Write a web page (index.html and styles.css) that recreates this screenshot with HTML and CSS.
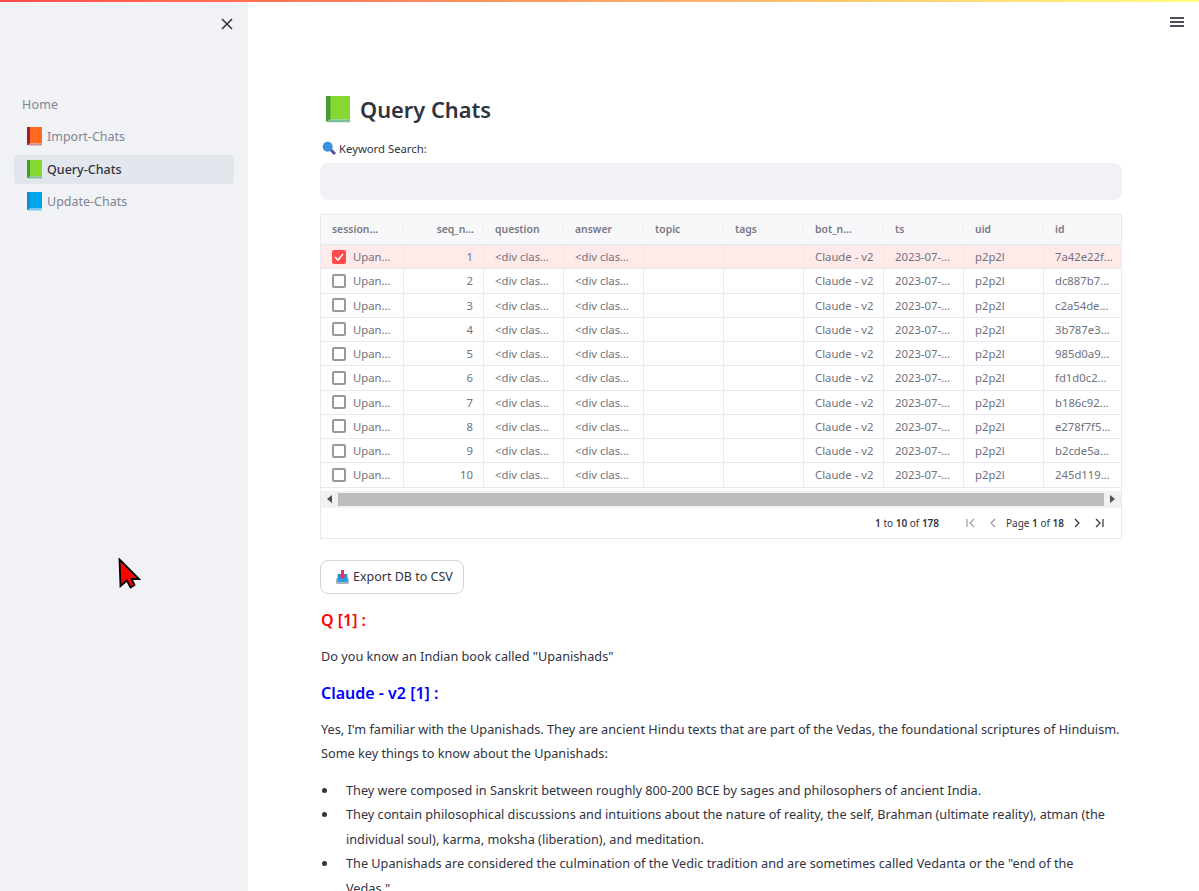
FILE: index.html
```html
<!DOCTYPE html>
<html lang="en">
<head>
    <meta charset="UTF-8">
    <meta name="viewport" content="width=device-width, initial-scale=1.0">
    <title>Query Chats</title>
    <link rel="stylesheet" href="styles.css">
</head>
<body>
    <div class="decoration"></div>
    <svg width="0" height="0" class="defs">
        <symbol id="book" viewBox="0 0 15 19">
            <rect class="book-spine" x="0" y="0" width="3" height="18"/>
            <rect class="book-cover" x="3" y="0" width="12" height="16.5"/>
            <rect class="book-pages" x="1.5" y="16.5" width="13.5" height="2"/>
        </symbol>
    </svg>
    <div class="app">
        <aside class="sidebar">
            <div class="sidebar-top">
                <svg class="close-icon" width="12" height="12" viewBox="0 0 12 12"><path d="M1 1l10 10M11 1L1 11"/></svg>
            </div>
            <nav class="nav">
                <a class="nav-home">Home</a>
                <a class="nav-item nav-orange"><svg class="book" width="15" height="19"><use href="#book"/></svg>Import-Chats</a>
                <a class="nav-item nav-green active"><svg class="book" width="15" height="19"><use href="#book"/></svg>Query-Chats</a>
                <a class="nav-item nav-blue"><svg class="book" width="15" height="19"><use href="#book"/></svg>Update-Chats</a>
            </nav>
        </aside>
        <main class="main">
            <div class="menu-row">
                <svg class="menu-icon" width="14" height="10" viewBox="0 0 14 10"><path d="M0 1h14M0 5h14M0 9h14"/></svg>
            </div>
            <div class="content">
                <h1 class="page-title"><svg class="title-book nav-green" width="24" height="27" viewBox="0 0 15 19" preserveAspectRatio="none"><use href="#book"/></svg>Query Chats</h1>

                <label class="search-label">
                    <svg width="14" height="14" viewBox="0 0 14 14"><path class="glass-handle" d="M8.5 8.5l4.5 4.5"/><circle class="glass-lens" cx="5.7" cy="5.7" r="5"/></svg>
                    Keyword Search:
                </label>
                <div class="search-input"></div>

                <div class="grid">
                    <div class="row row-head">
                        <div class="cell first">session…</div><div class="cell num">seq_n…</div><div class="cell">question</div><div class="cell">answer</div><div class="cell">topic</div><div class="cell">tags</div><div class="cell">bot_n…</div><div class="cell">ts</div><div class="cell">uid</div><div class="cell">id</div>
                    </div>
                    <div class="row selected">
                        <div class="cell first"><span class="check checked"><svg width="10" height="8" viewBox="0 0 10 8"><path d="M1 4l3 3 5-6"/></svg></span>Upan…</div><div class="cell num">1</div><div class="cell">&lt;div clas…</div><div class="cell">&lt;div clas…</div><div class="cell"></div><div class="cell"></div><div class="cell">Claude - v2</div><div class="cell">2023-07-…</div><div class="cell">p2p2l</div><div class="cell">7a42e22f…</div>
                    </div>
                    <div class="row">
                        <div class="cell first"><span class="check"></span>Upan…</div><div class="cell num">2</div><div class="cell">&lt;div clas…</div><div class="cell">&lt;div clas…</div><div class="cell"></div><div class="cell"></div><div class="cell">Claude - v2</div><div class="cell">2023-07-…</div><div class="cell">p2p2l</div><div class="cell">dc887b7…</div>
                    </div>
                    <div class="row">
                        <div class="cell first"><span class="check"></span>Upan…</div><div class="cell num">3</div><div class="cell">&lt;div clas…</div><div class="cell">&lt;div clas…</div><div class="cell"></div><div class="cell"></div><div class="cell">Claude - v2</div><div class="cell">2023-07-…</div><div class="cell">p2p2l</div><div class="cell">c2a54de…</div>
                    </div>
                    <div class="row">
                        <div class="cell first"><span class="check"></span>Upan…</div><div class="cell num">4</div><div class="cell">&lt;div clas…</div><div class="cell">&lt;div clas…</div><div class="cell"></div><div class="cell"></div><div class="cell">Claude - v2</div><div class="cell">2023-07-…</div><div class="cell">p2p2l</div><div class="cell">3b787e3…</div>
                    </div>
                    <div class="row">
                        <div class="cell first"><span class="check"></span>Upan…</div><div class="cell num">5</div><div class="cell">&lt;div clas…</div><div class="cell">&lt;div clas…</div><div class="cell"></div><div class="cell"></div><div class="cell">Claude - v2</div><div class="cell">2023-07-…</div><div class="cell">p2p2l</div><div class="cell">985d0a9…</div>
                    </div>
                    <div class="row">
                        <div class="cell first"><span class="check"></span>Upan…</div><div class="cell num">6</div><div class="cell">&lt;div clas…</div><div class="cell">&lt;div clas…</div><div class="cell"></div><div class="cell"></div><div class="cell">Claude - v2</div><div class="cell">2023-07-…</div><div class="cell">p2p2l</div><div class="cell">fd1d0c2…</div>
                    </div>
                    <div class="row">
                        <div class="cell first"><span class="check"></span>Upan…</div><div class="cell num">7</div><div class="cell">&lt;div clas…</div><div class="cell">&lt;div clas…</div><div class="cell"></div><div class="cell"></div><div class="cell">Claude - v2</div><div class="cell">2023-07-…</div><div class="cell">p2p2l</div><div class="cell">b186c92…</div>
                    </div>
                    <div class="row">
                        <div class="cell first"><span class="check"></span>Upan…</div><div class="cell num">8</div><div class="cell">&lt;div clas…</div><div class="cell">&lt;div clas…</div><div class="cell"></div><div class="cell"></div><div class="cell">Claude - v2</div><div class="cell">2023-07-…</div><div class="cell">p2p2l</div><div class="cell">e278f7f5…</div>
                    </div>
                    <div class="row">
                        <div class="cell first"><span class="check"></span>Upan…</div><div class="cell num">9</div><div class="cell">&lt;div clas…</div><div class="cell">&lt;div clas…</div><div class="cell"></div><div class="cell"></div><div class="cell">Claude - v2</div><div class="cell">2023-07-…</div><div class="cell">p2p2l</div><div class="cell">b2cde5a…</div>
                    </div>
                    <div class="row">
                        <div class="cell first"><span class="check"></span>Upan…</div><div class="cell num">10</div><div class="cell">&lt;div clas…</div><div class="cell">&lt;div clas…</div><div class="cell"></div><div class="cell"></div><div class="cell">Claude - v2</div><div class="cell">2023-07-…</div><div class="cell">p2p2l</div><div class="cell">245d119…</div>
                    </div>
                    <div class="scrollbar">
                        <span class="arrow arrow-left"></span>
                        <div class="scroll-track"><div class="scroll-thumb"></div></div>
                        <span class="arrow arrow-right"></span>
                    </div>
                    <div class="pager">
                        <span class="pager-count"><b>1</b> to <b>10</b> of <b>178</b></span>
                        <svg class="pager-icon off" width="10" height="10" viewBox="0 0 10 10"><path d="M1 1v8M8 1L4 5l4 4"/></svg>
                        <svg class="pager-icon off" width="10" height="10" viewBox="0 0 10 10"><path d="M7 1L3 5l4 4"/></svg>
                        <span class="pager-page">Page <b>1</b> of <b>18</b></span>
                        <svg class="pager-icon" width="10" height="10" viewBox="0 0 10 10"><path d="M3 1l4 4-4 4"/></svg>
                        <svg class="pager-icon" width="10" height="10" viewBox="0 0 10 10"><path d="M2 1l4 4-4 4M9 1v8"/></svg>
                    </div>
                </div>

                <button class="export-btn">
                    <svg width="13" height="14" viewBox="0 0 13 14"><rect x="0" y="8" width="13" height="6" rx="1.5" fill="#aab4bb"/><rect x="1.5" y="4" width="10" height="8" rx="1" fill="#2a9be0"/><path d="M6.5 0v6" stroke="#e8336a" stroke-width="3"/><path d="M2.8 5h7.4l-3.7 4z" fill="#e8336a"/></svg>
                    Export DB to CSV
                </button>

                <h3 class="q-head">Q [1] :</h3>
                <p>Do you know an Indian book called "Upanishads"</p>
                <h3 class="a-head">Claude - v2 [1] :</h3>
                <p>Yes, I'm familiar with the Upanishads. They are ancient Hindu texts that are part of the Vedas, the foundational scriptures of Hinduism.<br>Some key things to know about the Upanishads:</p>
                <ul>
                    <li>They were composed in Sanskrit between roughly 800-200 BCE by sages and philosophers of ancient India.</li>
                    <li>They contain philosophical discussions and intuitions about the nature of reality, the self, Brahman (ultimate reality), atman (the<br>individual soul), karma, moksha (liberation), and meditation.</li>
                    <li>The Upanishads are considered the culmination of the Vedic tradition and are sometimes called Vedanta or the "end of the<br>Vedas."</li>
                </ul>
            </div>
        </main>
    </div>
    <svg class="cursor" width="23" height="31" viewBox="0 0 23 31"><path d="M1.5 1.5L21 21h-7.5l3 6-4 2.5-3.5-7-6.5 5.5z" fill="#f00" stroke="#000" stroke-width="1.8"/></svg>
</body>
</html>
```
FILE: styles.css
```css
* {
    box-sizing: border-box;
}
html, body {
    height: 100%;
}
body {
    margin: 0;
    overflow: hidden;
    font-family: 'Noto Sans', 'Open Sans', sans-serif;
    font-size: 12.5px;
    color: #31333f;
    background-color: #ffffff;
}
.defs {
    display: block;
    height: 0;
}
.decoration {
    position: absolute;
    top: 0;
    left: 0;
    right: 0;
    height: 2px;
    background: linear-gradient(90deg, #ff4b4b, #fffd80);
}
.app {
    display: flex;
    height: 100%;
}

/* sidebar */
.sidebar {
    width: 248px;
    flex: none;
    background-color: #f0f2f6;
    padding: 0 14px;
}
.sidebar-top {
    display: flex;
    justify-content: flex-end;
    height: 92px;
    padding: 18px 1px 0 0;
}
.close-icon {
    stroke: #31333f;
    stroke-width: 1.6;
    fill: none;
}
.nav {
    display: flex;
    flex-direction: column;
}
.nav-home {
    padding-left: 8px;
    height: 30px;
    line-height: 25px;
    color: #808495;
    letter-spacing: 0.2px;
}
.nav-item {
    display: flex;
    align-items: center;
    gap: 5px;
    height: 29px;
    margin-bottom: 3.5px;
    padding-left: 13px;
    border-radius: 4px;
    color: #808495;
}
.nav-item.active {
    background-color: #e2e6ed;
    color: #31333f;
    font-weight: 500;
}
.book-spine {
    fill: var(--spine);
}
.book-cover {
    fill: var(--cover);
}
.book-pages {
    fill: var(--pages);
}
.nav-orange {
    --spine: #a01a3c;
    --cover: #ff6a1f;
    --pages: #d68a96;
}
.nav-green {
    --spine: #3f9e2f;
    --cover: #86d72f;
    --pages: #7fbfa0;
}
.nav-blue {
    --spine: #1a86d0;
    --cover: #00a6ed;
    --pages: #7fc4ee;
}

/* main */
.main {
    flex: 1;
    min-width: 0;
}
.menu-row {
    display: flex;
    justify-content: flex-end;
    height: 17px;
    padding: 17px 15px 0 0;
}
.menu-icon {
    stroke: #4c4e5a;
    stroke-width: 2;
    fill: none;
    flex: none;
}
.content {
    margin: 0 77px 0 72px;
    padding-top: 72px;
}
.page-title {
    display: flex;
    align-items: center;
    gap: 10px;
    margin: 0 0 0 6px;
    height: 40px;
    font-size: 21.8px;
    font-weight: 600;
}
.search-label {
    display: flex;
    align-items: center;
    gap: 3px;
    height: 20px;
    margin: 9px 0 5px 2px;
    font-size: 11.3px;
}
.glass-handle {
    stroke: #5c4a9e;
    stroke-width: 3;
}
.glass-lens {
    fill: #3b8fe0;
}
.search-input {
    height: 37px;
    background-color: #f0f2f6;
    border-radius: 8px;
}

/* table */
.grid {
    margin-top: 14px;
    border: 1px solid #e8eaee;
    font-size: 11.3px;
    color: #6f717c;
}
.row {
    display: grid;
    grid-template-columns: 83px repeat(9, 80px);
    height: 24.25px;
    border-bottom: 1px solid #e6e9f1;
    overflow: hidden;
}
.row-head {
    height: 30px;
    background-color: #f8f8fa;
    font-weight: 600;
    font-size: 10.4px;
    color: #777983;
}
.row.selected {
    background-color: #ffeaea;
}
.cell {
    display: flex;
    align-items: center;
    padding: 0 10px 0 11px;
    border-right: 1px solid #e8ebf1;
    white-space: nowrap;
    overflow: hidden;
    min-width: 0;
}
.cell:last-child {
    border-right: none;
}
.row-head .cell {
    border-right: none;
    padding-bottom: 2px;
    background: linear-gradient(#e8ebf1, #e8ebf1) right center / 1px 9px no-repeat;
}
.row-head .cell:last-child {
    background: none;
}
.num {
    justify-content: flex-end;
}
.first {
    gap: 7px;
}
.check {
    flex: none;
    width: 14px;
    height: 14px;
    border: 2px solid #999;
    border-radius: 2px;
    display: flex;
    align-items: center;
    justify-content: center;
    background-color: #fff;
}
.check.checked {
    border-color: #ff4b4b;
    background-color: #ff4b4b;
}
.check svg {
    stroke: #fff;
    stroke-width: 1.6;
    fill: none;
}
.scrollbar {
    display: flex;
    align-items: center;
    height: 17px;
    background-color: #f1f1f1;
    margin-top: 3px;
}
.arrow {
    flex: none;
    width: 17px;
    display: flex;
    justify-content: center;
}
.arrow::before {
    content: "";
    border-top: 4px solid transparent;
    border-bottom: 4px solid transparent;
}
.arrow-left::before {
    border-right: 5px solid #505050;
}
.arrow-right::before {
    border-left: 5px solid #505050;
}
.scroll-track {
    flex: 1;
    height: 13px;
}
.scroll-thumb {
    height: 100%;
    background-color: #bdbdbd;
}
.pager {
    display: flex;
    align-items: center;
    justify-content: flex-end;
    height: 30px;
    padding-right: 12px;
    font-size: 10px;
    color: #31333f;
}
.pager b {
    font-weight: 600;
}
.pager-count {
    margin-right: 20px;
}
.pager-icon {
    stroke: #31333f;
    stroke-width: 1.2;
    fill: none;
    margin-left: 7px;
    margin-right: 5px;
}
.pager-icon.off {
    stroke: #9a9ca5;
}
.pager-page {
    margin: 0 1px 0 3px;
}

/* body text */
.export-btn {
    display: flex;
    align-items: center;
    gap: 4px;
    height: 34px;
    width: 144px;
    margin-top: 21px;
    padding: 0 0 0 15px;
    background-color: #fff;
    border: 1px solid #d3d5da;
    border-radius: 8px;
    font-family: inherit;
    font-size: 12.5px;
    color: #31333f;
}
h3 {
    margin: 14px 0 12.5px;
    padding-left: 1px;
    font-size: 16px;
    line-height: 24px;
    font-weight: 600;
}
.a-head {
    margin: 11.5px 0 11.7px;
    color: #00f;
}
.q-head {
    color: #f00;
}
p {
    margin: 0 0 13px;
    padding-left: 1px;
    font-size: 12.7px;
    line-height: 24px;
}
ul {
    margin: 0;
    padding: 0 0 0 2px;
    list-style: none;
    font-size: 12.7px;
    line-height: 24.5px;
}
li {
    display: flex;
    gap: 19px;
}
li::before {
    content: "";
    flex: none;
    width: 5px;
    height: 5px;
    margin-top: 10px;
    border-radius: 50%;
    background-color: #31333f;
}
.cursor {
    position: absolute;
    left: 118px;
    top: 558px;
}
```
